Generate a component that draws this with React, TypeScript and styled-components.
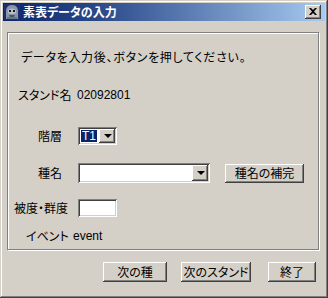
import React from 'react';
import styled, { createGlobalStyle } from 'styled-components';

const GlobalStyle = createGlobalStyle`
	html, body {
		margin: 0;
		padding: 0;
		background: #d4d0c8;
	}
	body {
		font-family: "Noto Sans CJK JP", "Liberation Sans", sans-serif;
		font-size: 12px;
		font-feature-settings: "palt";
		color: #000;
	}
`;

const raised = `
	box-shadow: inset -1px -1px #404040, inset 1px 1px #ffffff, inset -2px -2px #808080, inset 2px 2px #d4d0c8;
`;
const sunken = `
	box-shadow: inset 1px 1px #808080, inset -1px -1px #ffffff, inset 2px 2px #404040, inset -2px -2px #d4d0c8;
`;

const App = () => {
	return (
		<>
			<GlobalStyle />
			<Window>
				<TitleBar>
					<AppIcon viewBox="0 0 16 16">
						<rect x="0" y="0" width="16" height="16" fill="#1d2f6e" />
						<path d="M2 15 L2 6 Q3 1 8 1 Q13 1 14 6 L14 15 Z" fill="#8a96a8" />
						<path d="M4 6 Q8 3 12 6 L12 9 Q8 11 4 9 Z" fill="#b8c0cc" />
						<rect x="5" y="6" width="2" height="2" fill="#101828" />
						<rect x="9" y="6" width="2" height="2" fill="#101828" />
						<path d="M5 11 L11 11 L10 13 L6 13 Z" fill="#4a5468" />
						<rect x="3" y="13" width="10" height="2" fill="#6a7488" />
					</AppIcon>
					<Title>素表データの入力</Title>
					<CloseButton>
						<svg width="8" height="7" viewBox="0 0 8 7">
							<path d="M0 0 L2 0 L4 2 L6 0 L8 0 L5 3.5 L8 7 L6 7 L4 5 L2 7 L0 7 L3 3.5 Z" fill="#000" />
						</svg>
					</CloseButton>
				</TitleBar>
				<Client>
					<GroupBox>
						<Row $top={15} $height={16}>
							<Label $indent={12} $spacing={0.7}>データを入力後、ボタンを押してください。</Label>
						</Row>
						<Row $top={22} $height={16}>
							<Label $indent={9} $width={68}>スタンド名</Label>
							<Value>02092801</Value>
						</Row>
						<Row $top={24} $height={18}>
							<Label $indent={29} $width={69}>階層</Label>
							<Combo $width={39} $height={18}>
								<Selected>T1</Selected>
								<DropButton $height={14}>
									<Arrow />
								</DropButton>
							</Combo>
						</Row>
						<Row $top={18} $height={20}>
							<Label $indent={29} $width={69}>種名</Label>
							<Combo $width={132} $height={20}>
								<ComboFill />
								<DropButton $height={16}>
									<Arrow />
								</DropButton>
							</Combo>
							<Button $width={79} $height={19} style={{ marginLeft: 15 }}>
								種名の補完
							</Button>
						</Row>
						<Row $top={16} $height={18}>
							<Label $indent={5} $width={69}>被度・群度</Label>
							<TextBox />
						</Row>
						<Row $top={11} $height={16}>
							<Label $indent={17} $width={64}>イベント</Label>
							<Value>event</Value>
						</Row>
					</GroupBox>
					<ButtonBar>
						<Button $width={64} $height={20}>次の種</Button>
						<Button $width={70} $height={20}>次のスタンド</Button>
						<Button $width={48} $height={20} style={{ marginLeft: 3 }}>終了</Button>
					</ButtonBar>
				</Client>
			</Window>
		</>
	);
};
export default App;

const Window = styled.div`
	width: 328px;
	height: 298px;
	box-sizing: border-box;
	padding: 3px;
	background: #d4d0c8;
	box-shadow: inset -1px -1px #404040, inset 1px 1px #d4d0c8, inset -2px -2px #808080, inset 2px 2px #ffffff;
	display: flex;
	flex-direction: column;
`;

const TitleBar = styled.div`
	height: 18px;
	display: flex;
	align-items: center;
	padding: 0 4px 0 1px;
	background: linear-gradient(to right, #0a246a 0%, #2a4a8a 30%, #a6caf0 100%);
`;

const AppIcon = styled.svg`
	width: 16px;
	height: 16px;
	flex: none;
`;

const Title = styled.span`
	flex: 1;
	margin-left: 3px;
	color: #fff;
	font-weight: bold;
	font-size: 12px;
	line-height: 18px;
	white-space: nowrap;
`;

const CloseButton = styled.div`
	width: 16px;
	height: 14px;
	background: #d4d0c8;
	${raised}
	display: flex;
	align-items: center;
	justify-content: center;
	padding-bottom: 1px;
	box-sizing: border-box;
`;

const Client = styled.div`
	flex: 1;
	display: flex;
	flex-direction: column;
	padding: 0 6px 0 4px;
`;

const GroupBox = styled.div`
	margin-top: 11px;
	height: 218px;
	box-sizing: border-box;
	border: 1px solid #808080;
	box-shadow: inset 1px 1px #ffffff, 1px 1px #ffffff;
	padding: 1px 0 0 1px;
	display: flex;
	flex-direction: column;
`;

const Row = styled.div<{ $top: number; $height: number }>`
	margin-top: ${(p) => p.$top}px;
	height: ${(p) => p.$height}px;
	display: flex;
	align-items: center;
`;

const Label = styled.span<{ $indent: number; $width?: number; $spacing?: number }>`
	padding-left: ${(p) => p.$indent}px;
	width: ${(p) => (p.$width ? `${p.$width - p.$indent}px` : 'auto')};
	letter-spacing: ${(p) => p.$spacing ?? 0}px;
	flex: none;
	white-space: nowrap;
	line-height: 16px;
`;

const Value = styled.span`
	font-family: "Liberation Sans", "Noto Sans CJK JP", sans-serif;
	font-size: 12px;
	line-height: 16px;
`;

const Combo = styled.div<{ $width: number; $height: number }>`
	width: ${(p) => p.$width}px;
	height: ${(p) => p.$height}px;
	box-sizing: border-box;
	background: #fff;
	${sunken}
	padding: 2px;
	display: flex;
	align-items: stretch;
`;

const Selected = styled.div`
	flex: 1;
	margin: 1px 2px 1px 1px;
	background: #0a246a;
	color: #fff;
	font-family: "Liberation Sans", sans-serif;
	font-size: 12px;
	line-height: 12px;
	display: flex;
	align-items: center;
	padding-left: 1px;
`;

const ComboFill = styled.div`
	flex: 1;
`;

const DropButton = styled.div<{ $height: number }>`
	width: 16px;
	height: ${(p) => p.$height}px;
	background: #d4d0c8;
	${raised}
	display: flex;
	align-items: center;
	justify-content: center;
	flex: none;
`;

const Arrow = styled.div`
	width: 0;
	height: 0;
	border-left: 4px solid transparent;
	border-right: 4px solid transparent;
	border-top: 4px solid #000;
	margin-left: 1px;
`;

const TextBox = styled.div`
	width: 39px;
	height: 18px;
	box-sizing: border-box;
	background: #fff;
	${sunken}
`;

const Button = styled.div<{ $width: number; $height: number }>`
	width: ${(p) => p.$width}px;
	height: ${(p) => p.$height}px;
	box-sizing: border-box;
	background: #d4d0c8;
	${raised}
	display: flex;
	align-items: center;
	justify-content: center;
	white-space: nowrap;
	font-size: 12px;
	line-height: 12px;
	flex: none;
`;

const ButtonBar = styled.div`
	margin-top: 12px;
	display: flex;
	justify-content: flex-end;
	gap: 14px;
	padding-right: 3px;
`;
